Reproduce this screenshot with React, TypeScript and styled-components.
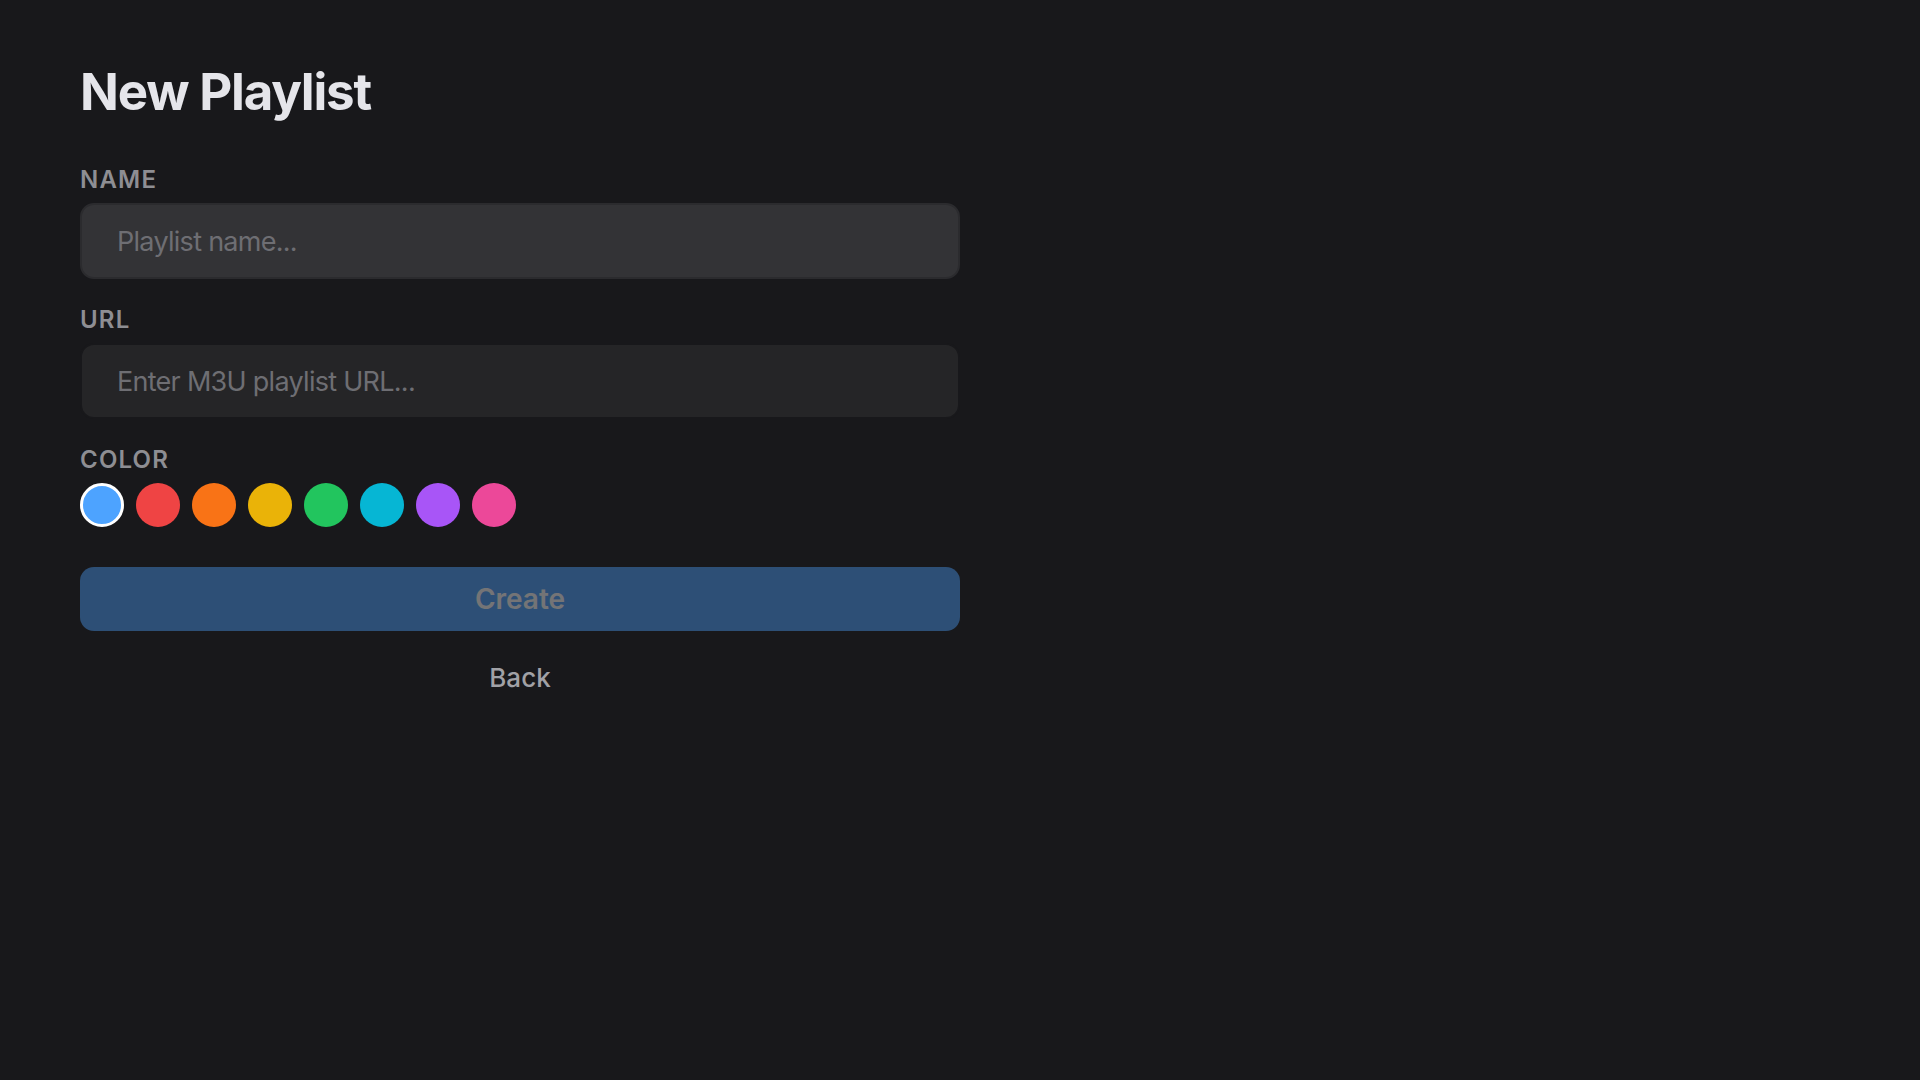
import React, { useState } from "react";
import styled, { createGlobalStyle } from "styled-components";

const GlobalStyle = createGlobalStyle`
  html, body {
    margin: 0;
    padding: 0;
    background: #18181b;
  }
  body {
    font-family: Inter, "Noto Sans", "Liberation Sans", sans-serif;
    -webkit-font-smoothing: antialiased;
  }
  * { box-sizing: border-box; }
`;

const Page = styled.div`
  width: 1920px;
  height: 1080px;
  background: #18181b;
  padding: 66px 0 0 80px;
`;

const Form = styled.div`
  width: 880px;
  display: flex;
  flex-direction: column;
`;

const Title = styled.h1`
  margin: 0 0 49px;
  font-size: 51px;
  line-height: 52px;
  font-weight: 700;
  color: #e5e5ea;
  letter-spacing: -1.2px;
`;

const Label = styled.label`
  display: block;
  font-size: 24px;
  line-height: 24px;
  font-weight: 600;
  color: #8e8e93;
  letter-spacing: 0.05em;
  text-transform: uppercase;
  padding-top: 1px;
  margin-bottom: 11px;
`;

const Field = styled.div`
  display: flex;
  flex-direction: column;
  margin-bottom: 28px;
`;

const Input = styled.input<{ $focused?: boolean }>`
  width: 880px;
  height: 76px;
  padding: 0 35px;
  border-radius: 14px;
  border: 2px solid ${(p) => (p.$focused ? "#2b2b2e" : "#18181b")};
  background: ${(p) => (p.$focused ? "#333336" : "#252527")};
  color: #e5e5ea;
  font-family: inherit;
  font-size: 27px;
  letter-spacing: -0.72px;
  outline: none;
  &::placeholder {
    color: #6e6e73;
  }
`;

const Swatches = styled.div`
  display: flex;
  gap: 12px;
`;

const Swatch = styled.button<{ $color: string; $selected?: boolean }>`
  width: 44px;
  height: 44px;
  border-radius: 50%;
  padding: 0;
  background: ${(p) => p.$color};
  border: ${(p) => (p.$selected ? "3px solid #ffffff" : "none")};
  cursor: pointer;
`;

const CreateButton = styled.button`
  margin-top: 12px;
  width: 880px;
  height: 64px;
  border: none;
  border-radius: 14px;
  background: #4da3ff;
  color: #ffffff;
  opacity: 0.4;
  font-family: inherit;
  font-size: 28px;
  font-weight: 600;
`;

const BackButton = styled.button`
  margin-top: 16px;
  width: 880px;
  height: 61px;
  border: none;
  background: transparent;
  color: #a1a1a6;
  font-family: inherit;
  font-size: 26px;
  font-weight: 500;
`;

const COLORS = [
  "#4da3ff",
  "#ef4444",
  "#f97316",
  "#eab308",
  "#22c55e",
  "#06b6d4",
  "#a855f7",
  "#ec4899",
];

export default function App() {
  const [color, setColor] = useState(COLORS[0]);
  return (
    <>
      <GlobalStyle />
      <Page>
        <Form>
          <Title>New Playlist</Title>
          <Field>
            <Label>Name</Label>
            <Input $focused placeholder="Playlist name..." />
          </Field>
          <Field>
            <Label>URL</Label>
            <Input placeholder="Enter M3U playlist URL..." />
          </Field>
          <Field>
            <Label>Color</Label>
            <Swatches>
              {COLORS.map((c) => (
                <Swatch
                  key={c}
                  $color={c}
                  $selected={c === color}
                  onClick={() => setColor(c)}
                />
              ))}
            </Swatches>
          </Field>
          <CreateButton disabled>Create</CreateButton>
          <BackButton>Back</BackButton>
        </Form>
      </Page>
    </>
  );
}
